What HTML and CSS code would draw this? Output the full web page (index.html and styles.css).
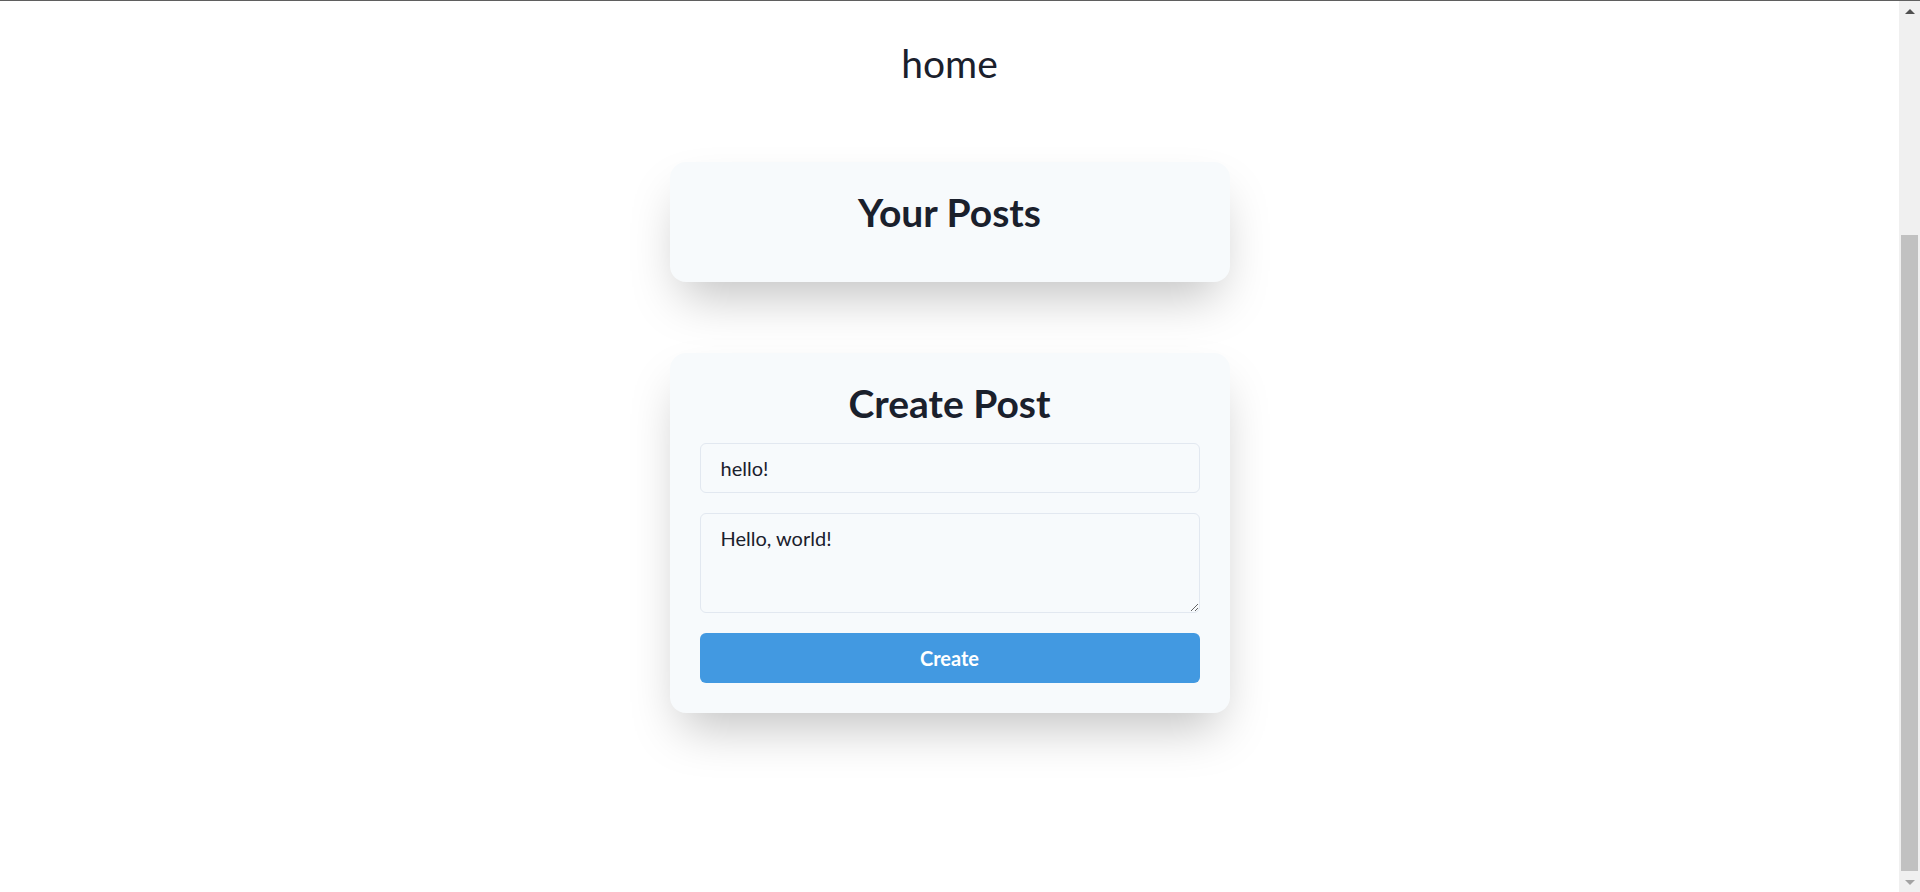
FILE: index.html
```html
<!DOCTYPE html>
<html lang="en">
<head>
<meta charset="utf-8">
<title>home</title>
<link rel="stylesheet" href="styles.css">
</head>
<body>
<div class="frame-line"></div>
<div class="page">
  <header class="site-header">
    <h1 class="site-title">home</h1>
  </header>
  <main class="cards">
    <section class="card">
      <h2 class="card-title">Your Posts</h2>
    </section>
    <section class="card">
      <h2 class="card-title">Create Post</h2>
      <form class="post-form">
        <input class="field field-input" type="text" value="hello!">
        <textarea class="field field-area">Hello, world!</textarea>
        <button class="btn" type="button">Create</button>
      </form>
    </section>
  </main>
</div>
<div class="scrollbar">
  <div class="sb-arrow sb-up"></div>
  <div class="sb-track"><div class="sb-thumb"></div></div>
  <div class="sb-arrow sb-down"></div>
</div>
</body>
</html>
```

FILE: styles.css
```css
* { box-sizing: border-box; }
html, body { margin: 0; padding: 0; background: #ffffff; }
body {
  font-family: Lato, "Noto Sans", "Liberation Sans", sans-serif;
  color: #1a202c;
  height: 892px;
  overflow: hidden;
}
.frame-line {
  position: fixed;
  top: 0; left: 0; right: 0;
  height: 1px;
  background: #5f5f5f;
  z-index: 5;
}
.page {
  width: 1899px;
  padding-top: 39px;
}
.site-header { display: flex; justify-content: center; }
.site-title {
  margin: 0;
  font-size: 39px;
  line-height: 48px;
  font-weight: 400;
  color: #1a202c;
}
.cards {
  display: flex;
  flex-direction: column;
  align-items: center;
  gap: 71px;
  margin-top: 75px;
}
.card {
  width: 560px;
  background: #f7fafc;
  border-radius: 16px;
  padding: 26px 30px 30px;
  box-shadow: 0 25px 50px -12px rgba(0, 0, 0, 0.25);
}
.card-title {
  margin: 0 0 16px;
  text-align: center;
  font-size: 39px;
  line-height: 48px;
  font-weight: 700;
  color: #1a202c;
}
.post-form {
  display: flex;
  flex-direction: column;
  gap: 20px;
}
.field {
  display: block;
  width: 100%;
  font-family: inherit;
  font-size: 20px;
  color: #1a202c;
  background: #f7fafc;
  border: 1px solid #e2e8f0;
  border-radius: 6px;
  padding: 0 20px;
  outline: none;
}
.field-input { height: 50px; }
.field-area {
  height: 100px;
  padding-top: 12px;
  line-height: 24px;
  resize: vertical;
}
.btn {
  height: 50px;
  width: 100%;
  border: none;
  border-radius: 6px;
  background: #4299e1;
  color: #ffffff;
  font-family: inherit;
  font-size: 20px;
  font-weight: 700;
}
.scrollbar {
  position: fixed;
  top: 1px; right: 0; bottom: 0;
  width: 21px;
  background: #f0f0f0;
  display: flex;
  flex-direction: column;
}
.sb-arrow { height: 20px; display: flex; align-items: center; justify-content: center; }
.sb-up::before {
  content: "";
  border-left: 5px solid transparent;
  border-right: 5px solid transparent;
  border-bottom: 5px solid #505050;
}
.sb-down::before {
  content: "";
  border-left: 5px solid transparent;
  border-right: 5px solid transparent;
  border-top: 5px solid #a3a3a3;
}
.sb-track { flex: 1; padding-top: 214px; padding-bottom: 1px; }
.sb-thumb { margin: 0 2px; height: 100%; background: #c1c1c1; }
```
